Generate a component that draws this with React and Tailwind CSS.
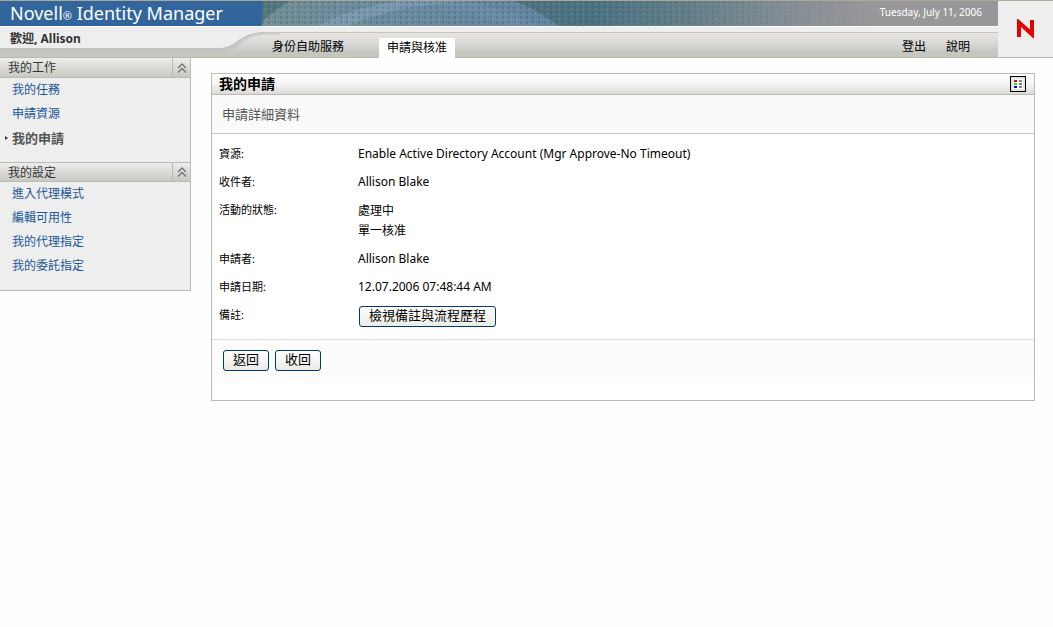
import { useState } from 'react';

const sections = [
    {
        title: '我的工作',
        items: ['我的任務', '申請資源', '我的申請'],
    },
    {
        title: '我的設定',
        items: ['進入代理模式', '編輯可用性', '我的代理指定', '我的委託指定'],
    },
];

const details = [
    { label: '資源:', lines: ['Enable Active Directory Account (Mgr Approve-No Timeout)'] },
    { label: '收件者:', lines: ['Allison Blake'] },
    { label: '活動的狀態:', lines: ['處理中', '單一核准'] },
    { label: '申請者:', lines: ['Allison Blake'] },
    { label: '申請日期:', lines: ['12.07.2006 07:48:44 AM'] },
];

function BannerArt() {
    return (
        <svg className="absolute inset-0 h-full w-full" viewBox="0 0 736 25" preserveAspectRatio="none" aria-hidden="true">
            <defs>
                <linearGradient id="sea" x1="0" x2="1" y1="0" y2="0">
                    <stop offset="0" stopColor="#54777e" />
                    <stop offset="0.3" stopColor="#4f747e" />
                    <stop offset="0.45" stopColor="#4d7380" />
                    <stop offset="0.58" stopColor="#647f8a" />
                    <stop offset="0.7" stopColor="#828d94" />
                    <stop offset="0.83" stopColor="#9a979a" />
                    <stop offset="1" stopColor="#9a979a" />
                </linearGradient>
                <linearGradient id="dome" x1="0" x2="1" y1="0" y2="0">
                    <stop offset="0" stopColor="#738f96" />
                    <stop offset="0.5" stopColor="#6b8b9f" />
                    <stop offset="1" stopColor="#6484a2" />
                </linearGradient>
                <linearGradient id="weaveFade" x1="0" x2="1" y1="0" y2="0">
                    <stop offset="0.45" stopColor="#fff" />
                    <stop offset="0.82" stopColor="#000" />
                </linearGradient>
                <mask id="weaveMask">
                    <rect width="736" height="25" fill="url(#weaveFade)" />
                </mask>
                <pattern id="weave" width="6" height="5" patternUnits="userSpaceOnUse">
                    <rect x="0" y="0" width="2" height="3" fill="#2d5966" opacity="0.25" />
                    <rect x="3" y="2" width="1" height="2" fill="#b5c8cc" opacity="0.2" />
                    <rect x="4" y="0" width="1" height="2" fill="#2d5966" opacity="0.18" />
                </pattern>
            </defs>
            <rect width="736" height="25" fill="url(#sea)" />
            <path d="M0 21C9 12 18 6 28 0H252C270 7 284 15 296 25H0Z" fill="url(#dome)" />
            <path d="M54 25C78 13 108 4 136 0H210C190 1 170 3 152 6C128 10 106 16 86 25Z" fill="#85a2ba" opacity="0.6" />
            <path d="M140 0H205C232 5 256 14 276 25H246C214 10 180 6 140 8Z" fill="#7391b0" opacity="0.4" />
            <rect width="736" height="25" fill="url(#weave)" mask="url(#weaveMask)" />
        </svg>
    );
}

function Header() {
    return (
        <header className="flex border-t border-[#aca899]">
            <div className="min-w-0 flex-1">
                <div className="flex h-[25px] bg-[#31659c]">
                    <h1 className="w-[262px] shrink-0 pl-[10px] text-[18px] leading-[25px] text-white">
                        Novell<span className="text-[11px]">®</span> Identity Manager
                    </h1>
                    <div className="relative flex-1">
                        <BannerArt />
                        <p className="relative pr-4 text-right text-[10px] leading-[22px] text-white">Tuesday, July 11, 2006</p>
                    </div>
                </div>
                <div className="relative flex h-8 border-t border-b border-t-white border-b-[#bbb8b0] bg-linear-to-b from-[#e6e4dc] from-25% via-[#d8d8d8] via-55% to-[#c4c7bf] to-85%">
                    <div className="absolute inset-x-0 top-0 h-[6px] border-b border-[#c4c4c4] bg-[#eeeeee]"></div>
                    <svg className="absolute top-0 left-0" width="280" height="30" viewBox="0 0 280 30" aria-hidden="true">
                        <path d="M0 0H280V8H268C240 8 242 24 222 24H0Z" fill="#b9bab4" opacity="0.45" />
                        <path d="M0 0H280V6H266C240 6 240 22 220 22H0Z" fill="#c2c2be" />
                        <path d="M0 0H280V5H266C238 5 238 21 219 21H0Z" fill="#eeeeee" />
                    </svg>
                    <p className="relative w-[264px] shrink-0 pl-[10px] text-[12px] leading-6 font-bold text-[#333333]">歡迎, Allison</p>
                    <nav className="relative flex flex-1 items-end text-[12px] leading-5 text-black">
                        <a href="#self-service" className="px-2">身份自助服務</a>
                        <a href="#requests" className="ml-[27px] -mb-px h-5 bg-white px-2">申請與核准</a>
                        <div className="ml-auto flex gap-5 pr-7">
                            <a href="#logout">登出</a>
                            <a href="#help">說明</a>
                        </div>
                    </nav>
                </div>
            </div>
            <div className="flex w-[55px] shrink-0 justify-center border-b border-[#bbb8b0] bg-[#eeeeee] pt-[18px]">
                <svg width="17" height="19" viewBox="0 0 17 19" role="img" aria-label="Novell">
                    <path d="M0 18V0H1L13 10.5V1H17V19H16L4 8V18Z" fill="#e60000" />
                </svg>
            </div>
        </header>
    );
}

function Sidebar() {
    const [closed, setClosed] = useState([]);

    const toggle = (title) => {
        setClosed(closed.includes(title) ? closed.filter((t) => t !== title) : [...closed, title]);
    };

    return (
        <aside className="w-[191px] shrink-0 border-r border-b border-[#bbbbb5] bg-[#eeeeee] text-[12px]">
            {sections.map((section, index) => (
                <section key={section.title}>
                    <div className={`flex h-5 border-b border-[#bbbbb5] bg-linear-to-b from-[#ededed] to-[#c8c9c2] ${index > 0 ? 'border-t' : ''}`}>
                        <h2 className="flex-1 pl-2 leading-[19px] text-[#333333]">{section.title}</h2>
                        <button
                            onClick={() => toggle(section.title)}
                            aria-label={section.title}
                            className="flex w-[18px] items-center justify-center border-l border-[#bbbbb5]"
                        >
                            <svg width="10" height="10" viewBox="0 0 10 10" fill="none" stroke="#707070" strokeWidth="1.3">
                                <path d="M1 5L5 1L9 5M1 9.5L5 5.5L9 9.5" />
                            </svg>
                        </button>
                    </div>
                    {!closed.includes(section.title) && (
                        <ul className="pb-3 leading-6">
                            {section.items.map((item) => (
                                <li key={item} className="flex items-center">
                                    <span className="flex w-3 justify-center">
                                        {item === '我的申請' && (
                                            <svg width="3" height="4" viewBox="0 0 3 4"><path d="M0 0L3 2L0 4Z" fill="#333333" /></svg>
                                        )}
                                    </span>
                                    <a
                                        href={`#${item}`}
                                        className={item === '我的申請' ? 'text-[13px] font-bold text-[#555555]' : 'text-[#1a5799]'}
                                    >
                                        {item}
                                    </a>
                                </li>
                            ))}
                        </ul>
                    )}
                </section>
            ))}
        </aside>
    );
}

function Button({ children }) {
    return (
        <button className="h-[21px] rounded-[3px] border border-[#003c74] bg-linear-to-b from-white to-[#ecebe6] px-[9px] pb-[2px] text-[13px] leading-[17px] text-black">
            {children}
        </button>
    );
}

function LegendIcon() {
    return (
        <svg width="16" height="16" viewBox="0 0 16 16" shapeRendering="crispEdges">
            <rect width="16" height="16" fill="#000000" />
            <rect x="1" y="1" width="14" height="14" fill="#e6e6df" />
            <rect x="3" y="3" width="10" height="10" fill="#ffffff" />
            <rect x="4" y="4" width="3" height="2" fill="#ff0000" />
            <rect x="4" y="7" width="3" height="2" fill="#00ff00" />
            <rect x="4" y="10" width="3" height="2" fill="#0000ff" />
            <path d="M9 4H12V6H9ZM9 7H12V9H9ZM9 10H12V12H9Z" fill="#848484" />
        </svg>
    );
}

export default function App() {
    return (
        <div lang="zh-Hant" className={`min-h-screen bg-[#fefefe] font-["Noto_Sans","Noto_Sans_CJK_TC",sans-serif]`}>
            <Header />
            <div className="flex items-start">
                <Sidebar />
                <main className="mt-[15px] mr-[18px] ml-5 flex-1 border border-[#bbbbb5] bg-white text-black">
                    <div className="flex h-[21px] items-center justify-between border-b border-[#bbbbb5] bg-linear-to-b from-white via-[#f5f3f4] to-[#dadbd6] pr-2 pl-[7px]">
                        <h2 className="text-[14px] leading-5 font-bold">我的申請</h2>
                        <button aria-label="圖例">
                            <LegendIcon />
                        </button>
                    </div>
                    <h3 className="border-b border-[#c4c4c0] bg-[#fafaf8] pl-[10px] text-[13px] leading-[38px] text-[#555555]">申請詳細資料</h3>
                    <dl className="pt-[6px] pb-1 pl-[7px]">
                        {details.map((row) => (
                            <div key={row.label} className="flex">
                                <dt className="w-[139px] shrink-0 text-[11px] leading-7">{row.label}</dt>
                                <dd className="pt-[5px] pb-1 text-[12px] leading-5 not-has-[p+p]:pt-1">
                                    {row.lines.map((line) => (
                                        <p key={line}>{line}</p>
                                    ))}
                                </dd>
                            </div>
                        ))}
                        <div className="flex">
                            <dt className="w-[139px] shrink-0 text-[11px] leading-7">備註:</dt>
                            <dd className="flex pt-[5px] pb-2 pl-px">
                                <Button>檢視備註與流程歷程</Button>
                            </dd>
                        </div>
                    </dl>
                    <div className="mb-[18px] flex gap-[6px] border-t border-[#deded9] bg-[#fcfcfa] pt-[10px] pb-[11px] pl-[11px]">
                        <Button>返回</Button>
                        <Button>收回</Button>
                    </div>
                </main>
            </div>
        </div>
    );
}
